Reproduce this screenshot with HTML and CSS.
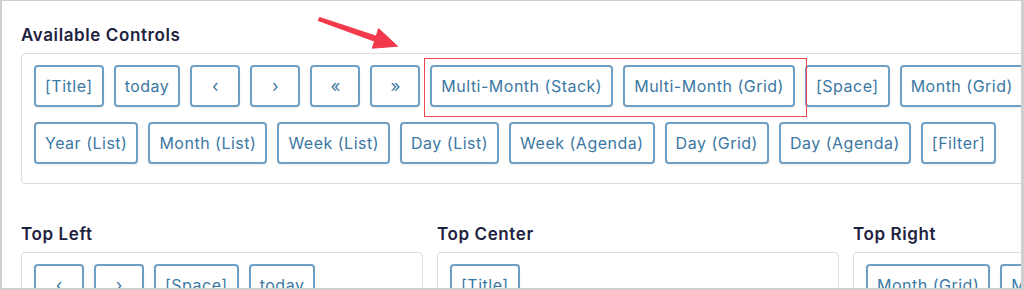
FILE: index.html
```html
<!DOCTYPE html>
<html>
<head>
<meta charset="utf-8">
<link rel="stylesheet" href="styles.css">
</head>
<body>
<div class="frame">
  <section class="section">
    <h2 class="heading">Available Controls</h2>
    <div class="box box-wide">
      <div class="row">
        <span class="btn">[Title]</span>
        <span class="btn">today</span>
        <span class="btn btn-icon">&lsaquo;</span>
        <span class="btn btn-icon">&rsaquo;</span>
        <span class="btn btn-icon">&laquo;</span>
        <span class="btn btn-icon">&raquo;</span>
        <span class="btn">Multi-Month (Stack)</span>
        <span class="btn">Multi-Month (Grid)</span>
        <span class="btn">[Space]</span>
        <span class="btn">Month (Grid)</span>
        <span class="btn">Week (Grid)</span>
      </div>
      <div class="row">
        <span class="btn">Year (List)</span>
        <span class="btn">Month (List)</span>
        <span class="btn">Week (List)</span>
        <span class="btn">Day (List)</span>
        <span class="btn">Week (Agenda)</span>
        <span class="btn">Day (Grid)</span>
        <span class="btn">Day (Agenda)</span>
        <span class="btn">[Filter]</span>
      </div>
    </div>
  </section>

  <div class="columns">
    <section class="col">
      <h2 class="heading">Top Left</h2>
      <div class="box">
        <div class="row">
          <span class="btn btn-icon">&lsaquo;</span>
          <span class="btn btn-icon">&rsaquo;</span>
          <span class="btn">[Space]</span>
          <span class="btn">today</span>
        </div>
      </div>
    </section>
    <section class="col">
      <h2 class="heading">Top Center</h2>
      <div class="box">
        <div class="row">
          <span class="btn">[Title]</span>
        </div>
      </div>
    </section>
    <section class="col">
      <h2 class="heading">Top Right</h2>
      <div class="box">
        <div class="row">
          <span class="btn">Month (Grid)</span>
          <span class="btn">Multi-Month (Stack)</span>
        </div>
      </div>
    </section>
  </div>

  <div class="highlight"></div>
  <svg class="arrow" width="1024" height="290" viewBox="0 0 1024 290">
    <polygon points="319.5,17.4 376.3,36.2 378.6,28.6 397.5,46.2 372.3,48.2 374.7,41.2 318.3,20.6" fill="#f2384b" stroke="#f2384b" stroke-width="1" stroke-linejoin="round"/>
  </svg>
</div>
</body>
</html>
```

FILE: styles.css
```css
* { box-sizing: border-box; }
html, body { margin: 0; padding: 0; background: #ffffff; }
body { font-family: Inter, "Noto Sans", "Liberation Sans", sans-serif; }

.frame {
  position: relative;
  width: 1024px;
  height: 290px;
  overflow: hidden;
  border-style: solid;
  border-color: #cfcfcf;
  border-width: 1px 3px 2px 2px;
  padding: 24px 0 0 19px;
  background: #fff;
}

.heading {
  margin: 0 0 8px 0;
  font-size: 17px;
  line-height: 20px;
  font-weight: 600;
  letter-spacing: 0.6px;
  color: #1e2240;
  white-space: nowrap;
}

.box {
  border: 1px solid #dcdcde;
  border-radius: 4px;
  padding: 11px 12px 19px 12px;
  display: flex;
  flex-direction: column;
  gap: 15px;
  background: #fff;
}

.box-wide { width: 1300px; }

.row {
  display: flex;
  gap: 10px;
  flex-wrap: nowrap;
}

.btn {
  flex: none;
  display: inline-flex;
  align-items: center;
  justify-content: center;
  height: 42px;
  padding: 0 9px;
  border: 2px solid #6e9fc4;
  border-radius: 4px;
  color: #3b78a4;
  font-size: 16px;
  line-height: 20px;
  letter-spacing: 0.5px;
  white-space: nowrap;
  background: #fff;
  box-shadow: 0 1px 2px rgba(0, 0, 0, 0.08);
}

.btn-icon { width: 50px; font-size: 17px; letter-spacing: 0; }

.columns {
  display: grid;
  grid-template-columns: 402px 402px 402px;
  column-gap: 14px;
  margin-top: 40px;
}

.highlight {
  position: absolute;
  left: 422px;
  top: 57px;
  width: 383px;
  height: 59px;
  border: 1.5px solid #ef4653;
}

.arrow {
  position: absolute;
  left: -2px;
  top: -1px;
}
```
